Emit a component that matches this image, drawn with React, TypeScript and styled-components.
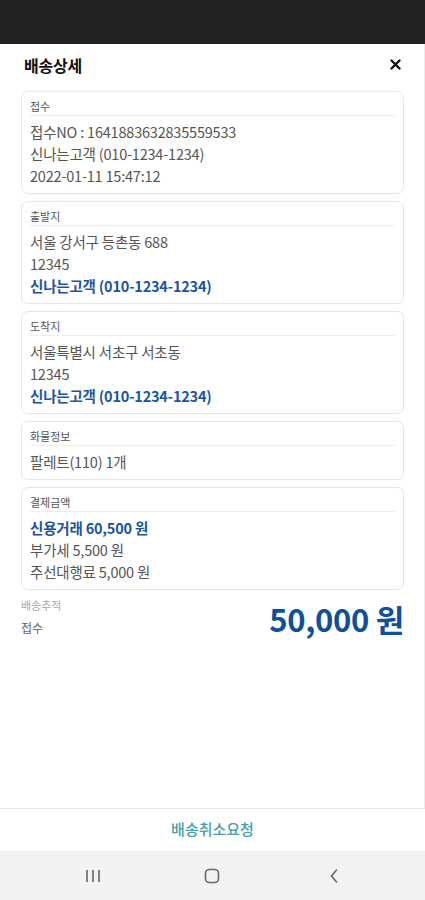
import React from "react";
import styled, { createGlobalStyle } from "styled-components";

const Global = createGlobalStyle`
  html, body { margin: 0; padding: 0; background: #fff; }
  body { font-family: "Noto Sans CJK KR", "Noto Sans", sans-serif; }
  * { box-sizing: border-box; }
`;

const Screen = styled.div`
  width: 425px;
  height: 900px;
  display: flex;
  flex-direction: column;
  background: #fff;
  overflow: hidden;
`;

const StatusBar = styled.div`
  height: 44px;
  background: #222222;
  flex-shrink: 0;
`;

const Main = styled.div`
  flex: 1;
  display: flex;
  flex-direction: column;
  padding: 0 20px 0 21px;
  border-right: 1px solid #ececec;
`;

const Header = styled.div`
  height: 47px;
  display: flex;
  align-items: center;
  justify-content: space-between;
  padding: 0 2px 6px 3px;
`;

const Title = styled.h1`
  margin: 0;
  font-size: 16px;
  font-weight: 700;
  color: #111;
  letter-spacing: -0.2px;
`;

const Close = styled.button`
  border: 0;
  background: none;
  padding: 0;
  width: 14px;
  height: 14px;
  display: flex;
  align-items: center;
  justify-content: center;
`;

const Cards = styled.div`
  display: flex;
  flex-direction: column;
  gap: 7px;
`;

const Card = styled.section`
  border: 1px solid #e6e6e6;
  border-radius: 7px;
  padding: 6px 8px 6px 8px;
  box-shadow: 0 0 2px rgba(0,0,0,0.04);
`;

const Label = styled.div`
  font-size: 11px;
  line-height: 16px;
  color: #555;
  padding-bottom: 1px;
  border-bottom: 1px solid #eeeeee;
  margin-bottom: 5px;
`;

const Line = styled.div<{ $accent?: boolean }>`
  font-size: 14.5px;
  line-height: 22px;
  color: ${(p) => (p.$accent ? "#1b559f" : "#555")};
  font-weight: ${(p) => (p.$accent ? 700 : 400)};
  letter-spacing: -0.2px;
  white-space: nowrap;
`;

const Summary = styled.div`
  display: flex;
  justify-content: space-between;
  align-items: flex-end;
  padding: 7px 0 0 0;
`;

const Tracking = styled.div`
  display: flex;
  flex-direction: column;
  gap: 6px;
`;

const TrackLabel = styled.div`
  font-size: 11px;
  line-height: 16px;
  color: #aaa;
`;

const TrackValue = styled.div`
  font-size: 12px;
  line-height: 18px;
  color: #666;
`;

const Price = styled.div`
  font-size: 31px;
  line-height: 36px;
  font-weight: 700;
  color: #0f4f9c;
  letter-spacing: -0.3px;
`;

const Spacer = styled.div`
  flex: 1;
`;

const Footer = styled.button`
  height: 43px;
  border: 0;
  border-top: 1px solid #dde9ea;
  background: #fff;
  color: #45a0aa;
  font-family: inherit;
  font-size: 15px;
  font-weight: 500;
  display: flex;
  align-items: center;
  justify-content: center;
  flex-shrink: 0;
  padding: 0 0 4px;
`;

const NavBar = styled.div`
  height: 49px;
  background: #f2f2f2;
  display: grid;
  grid-template-columns: 1fr 1fr 1fr;
  align-items: center;
  justify-items: center;
  padding: 0 30px;
  flex-shrink: 0;
`;

const cards = [
  {
    label: "접수",
    lines: [
      { t: "접수NO : 1641883632835559533" },
      { t: "신나는고객 (010-1234-1234)" },
      { t: "2022-01-11 15:47:12" },
    ],
  },
  {
    label: "출발지",
    lines: [
      { t: "서울 강서구 등촌동 688" },
      { t: "12345" },
      { t: "신나는고객 (010-1234-1234)", a: true },
    ],
  },
  {
    label: "도착지",
    lines: [
      { t: "서울특별시 서초구 서초동" },
      { t: "12345" },
      { t: "신나는고객 (010-1234-1234)", a: true },
    ],
  },
  {
    label: "화물정보",
    lines: [{ t: "팔레트(110) 1개" }],
  },
  {
    label: "결제금액",
    lines: [
      { t: "신용거래 60,500 원", a: true },
      { t: "부가세 5,500 원" },
      { t: "주선대행료 5,000 원" },
    ],
  },
];

export default function App() {
  return (
    <>
      <Global />
      <Screen>
        <StatusBar />
        <Main>
          <Header>
            <Title>배송상세</Title>
            <Close aria-label="닫기">
              <svg width="11" height="11" viewBox="0 0 11 11">
                <path d="M1.5 1.5 L9.5 9.5 M9.5 1.5 L1.5 9.5" stroke="#111" strokeWidth="2.4" strokeLinecap="round" />
              </svg>
            </Close>
          </Header>
          <Cards>
            {cards.map((c) => (
              <Card key={c.label}>
                <Label>{c.label}</Label>
                {c.lines.map((l, i) => (
                  <Line key={i} $accent={l.a}>
                    {l.t}
                  </Line>
                ))}
              </Card>
            ))}
          </Cards>
          <Summary>
            <Tracking>
              <TrackLabel>배송추적</TrackLabel>
              <TrackValue>접수</TrackValue>
            </Tracking>
            <Price>50,000 원</Price>
          </Summary>
          <Spacer />
        </Main>
        <Footer>배송취소요청</Footer>
        <NavBar>
          <svg width="16" height="14" viewBox="0 0 16 14" style={{ marginLeft: 5 }}>
            <path d="M2 1 V13 M8 1 V13 M14 1 V13" stroke="#666" strokeWidth="1.6" />
          </svg>
          <svg width="16" height="16" viewBox="0 0 16 16">
            <rect x="1.5" y="1.5" width="13" height="13" rx="4" fill="none" stroke="#666" strokeWidth="1.6" />
          </svg>
          <svg width="10" height="16" viewBox="0 0 10 16">
            <path d="M7.5 2 L2.5 8 L7.5 14" fill="none" stroke="#666" strokeWidth="1.6" strokeLinecap="round" />
          </svg>
        </NavBar>
      </Screen>
    </>
  );
}
